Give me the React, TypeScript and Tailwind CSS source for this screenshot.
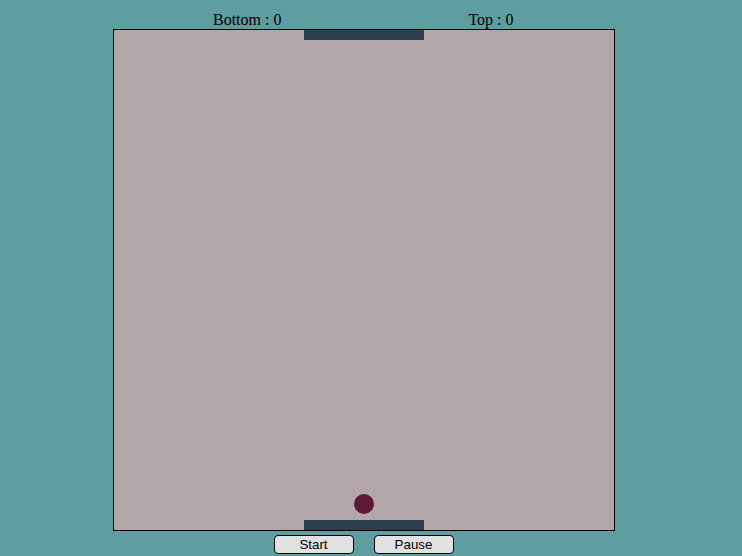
export default function App() {
  return (
    <div className="h-[556px] w-full overflow-hidden bg-[#5f9ea0] pl-[113px] font-['Liberation_Serif',serif] text-black">
      <div className="flex w-[502px] flex-col">
        <div className="flex h-[29px] items-end pt-[11px] text-[16px] leading-[18px]">
          <span className="ml-[100px]">Bottom : 0</span>
          <span className="ml-[187px]">Top : 0</span>
        </div>

        <div className="relative h-[502px] w-[502px] border border-black bg-[#b2a6a9]">
          <div className="absolute left-[190px] top-0 h-[10px] w-[120px] bg-[#2c3e50]" />
          <div className="absolute left-[240px] top-[464px] h-[20px] w-[20px] rounded-full bg-[#5c1a35]" />
          <div className="absolute bottom-0 left-[190px] h-[10px] w-[120px] bg-[#2c3e50]" />
        </div>

        <div className="mt-[4px] flex justify-center gap-[20px] pr-[1px] font-['Liberation_Sans',sans-serif] text-[13.33px]">
          <button className="h-[19px] w-[80px] rounded-[4px] border border-black bg-[#e1e1e1] leading-[17px]">Start</button>
          <button className="h-[19px] w-[80px] rounded-[4px] border border-black bg-[#e1e1e1] leading-[17px]">Pause</button>
        </div>
      </div>
    </div>
  );
}
